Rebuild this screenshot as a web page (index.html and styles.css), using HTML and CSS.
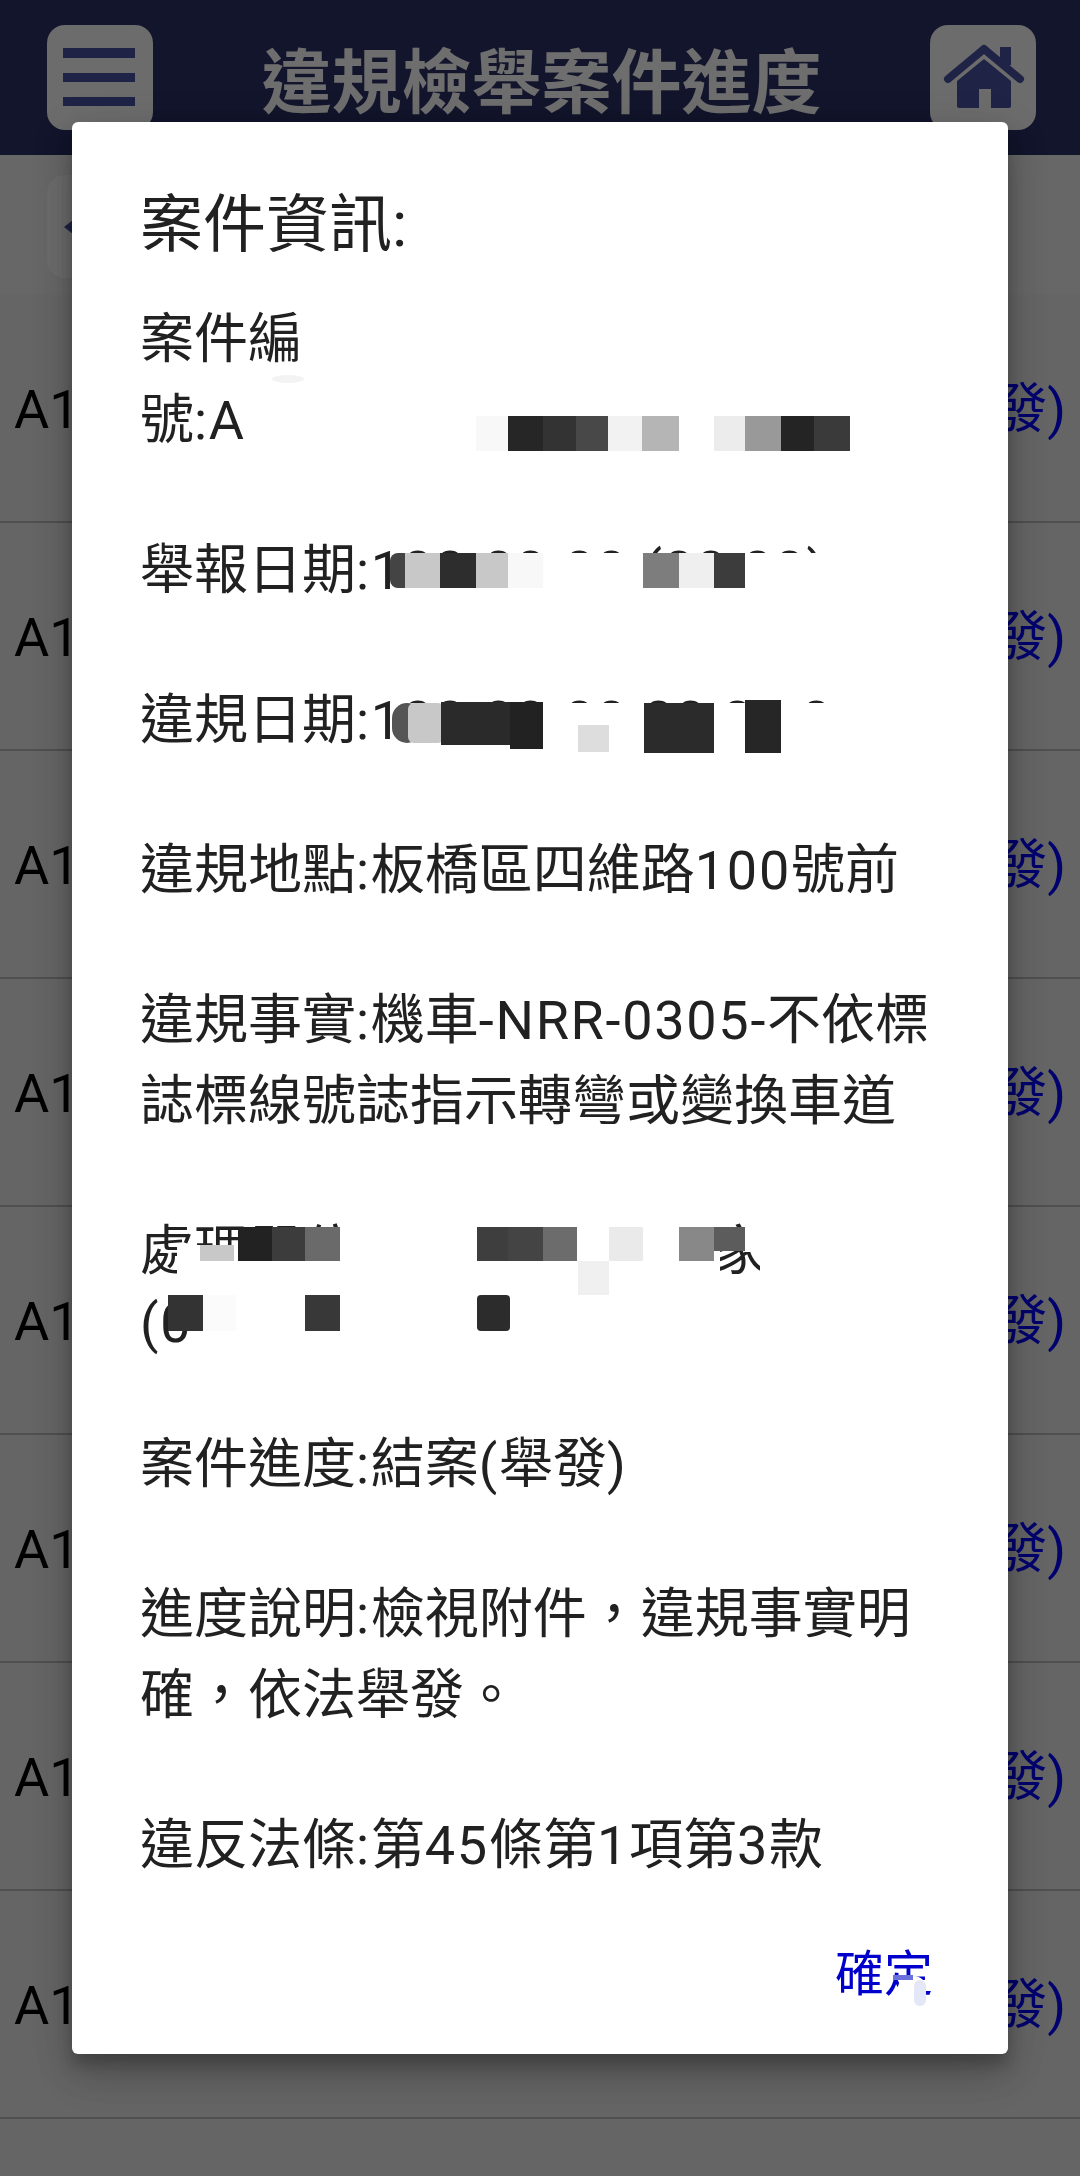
FILE: index.html
```html
<!DOCTYPE html>
<html lang="zh-Hant">
<head>
<meta charset="utf-8">
<title>違規檢舉案件進度</title>
<link rel="stylesheet" href="styles.css">
</head>
<body>
<header class="topbar">
  <button class="icon-btn" aria-label="選單">
    <svg class="btn-svg" viewBox="0 0 106 105"><rect class="glyph" x="16" y="23" width="72" height="10"/><rect class="glyph" x="16" y="48" width="72" height="9"/><rect class="glyph" x="16" y="72" width="72" height="9"/></svg>
  </button>
  <h1 class="page-title">違規檢舉案件進度</h1>
  <button class="icon-btn" aria-label="首頁">
    <svg class="btn-svg" viewBox="0 0 106 105"><path class="glyph" d="M27 56 54 34 81 56V81Q81 83 79 83H61V64H49V83H29Q27 83 27 81Z"/><rect class="glyph" x="70" y="22" width="11" height="18"/><path class="roof" d="M18 54 54 24 90 54"/></svg>
  </button>
</header>
<nav class="subbar">
  <button class="back-btn" aria-label="返回"><svg class="back-svg" viewBox="0 0 20 30"><path class="glyph" d="M16 4 2 15 16 26Z"/></svg></button>
</nav>
<main class="case-list">
  <div class="case-row"><span>A1</span><span class="status">結案(舉發)</span></div>
  <div class="case-row"><span>A1</span><span class="status">結案(舉發)</span></div>
  <div class="case-row"><span>A1</span><span class="status">結案(舉發)</span></div>
  <div class="case-row"><span>A1</span><span class="status">結案(舉發)</span></div>
  <div class="case-row"><span>A1</span><span class="status">結案(舉發)</span></div>
  <div class="case-row"><span>A1</span><span class="status">結案(舉發)</span></div>
  <div class="case-row"><span>A1</span><span class="status">結案(舉發)</span></div>
  <div class="case-row"><span>A1</span><span class="status">結案(舉發)</span></div>
</main>
<div class="scrim">
  <section class="dialog">
    <h2 class="dialog-title">案件資訊<span class="lat">:</span></h2>
    <p class="field">案件編<br>號<span class="lat">:A</span></p>
    <p class="field">舉報日期<span class="lat">:100-00-00 (00:00)</span></p>
    <p class="field">違規日期<span class="lat">:100-00-00 00:00:0</span></p>
    <p class="field">違規地點<span class="lat">:</span>板橋區四維路<span class="lat">100</span>號前</p>
    <p class="field">違規事實<span class="lat">:</span>機車<span class="lat">-NRR-0305-</span>不依標誌標線號誌指示轉彎或變換車道</p>
    <p class="field">處理單位<span class="lat">:</span><span class="gap"></span>家<span class="phone lat">(0</span></p>
    <p class="field">案件進度<span class="lat">:</span>結案<span class="lat">(</span>舉發<span class="lat">)</span></p>
    <p class="field">進度說明<span class="lat">:</span>檢視附件&#65292;違規事實明確&#65292;依法舉發。</p>
    <p class="field">違反法條<span class="lat">:</span>第<span class="lat">45</span>條第<span class="lat">1</span>項第<span class="lat">3</span>款</p>
    <div class="actions"><span class="confirm">確定</span></div>
    <svg class="redactions" viewBox="72 122 936 1932" aria-hidden="true">
      <ellipse cx="288" cy="379" rx="16" ry="4" fill="#f3f3f3"/>
      <rect x="476" y="416" width="32" height="35" fill="#f8f8f8"/>
      <rect x="508" y="416" width="35" height="35" fill="#262626"/>
      <rect x="543" y="416" width="33" height="35" fill="#333333"/>
      <rect x="576" y="416" width="32" height="35" fill="#484848"/>
      <rect x="608" y="416" width="34" height="35" fill="#f2f2f2"/>
      <rect x="642" y="416" width="37" height="35" fill="#b5b5b5"/>
      <rect x="714" y="416" width="31" height="35" fill="#ececec"/>
      <rect x="745" y="416" width="36" height="35" fill="#999999"/>
      <rect x="781" y="416" width="33" height="35" fill="#242424"/>
      <rect x="814" y="416" width="36" height="35" fill="#3a3a3a"/>

      <rect x="390" y="553" width="445" height="55" fill="#ffffff"/>
      <rect x="390" y="553" width="22" height="35" rx="8" fill="#444444"/>
      <rect x="405" y="553" width="35" height="35" fill="#c8c8c8"/>
      <rect x="440" y="553" width="36" height="35" fill="#2d2d2d"/>
      <rect x="476" y="553" width="32" height="35" fill="#c8c8c8"/>
      <rect x="508" y="553" width="35" height="35" fill="#f8f8f8"/>
      <rect x="643" y="553" width="36" height="35" fill="#7d7d7d"/>
      <rect x="679" y="553" width="35" height="35" fill="#efefef"/>
      <rect x="714" y="553" width="31" height="35" fill="#3c3c3c"/>

      <rect x="392" y="703" width="470" height="55" fill="#ffffff"/>
      <rect x="392" y="703" width="30" height="40" rx="15" fill="#555555"/>
      <rect x="408" y="703" width="36" height="40" rx="6" fill="#c8c8c8"/>
      <rect x="441" y="702" width="102" height="43" fill="#2a2a2a"/>
      <rect x="510" y="702" width="33" height="47" fill="#222222"/>
      <rect x="578" y="725" width="31" height="27" fill="#dddddd"/>
      <rect x="644" y="703" width="70" height="50" fill="#2b2b2b"/>
      <rect x="745" y="700" width="36" height="53" fill="#262626"/>

      <rect x="177" y="1245" width="61" height="48" fill="#ffffff"/>
      <rect x="238" y="1227" width="482" height="66" fill="#ffffff"/>
      <rect x="745" y="1215" width="40" height="37" fill="#ffffff"/>
      <rect x="760" y="1250" width="25" height="40" fill="#ffffff"/>
      <rect x="200" y="1245" width="34" height="16" fill="#c8c8c8"/>
      <rect x="238" y="1227" width="34" height="34" fill="#222222"/>
      <rect x="272" y="1227" width="33" height="34" fill="#3c3c3c"/>
      <rect x="305" y="1227" width="35" height="34" fill="#6a6a6a"/>
      <rect x="477" y="1227" width="31" height="34" fill="#3e3e3e"/>
      <rect x="508" y="1227" width="35" height="34" fill="#444444"/>
      <rect x="543" y="1227" width="34" height="34" fill="#6c6c6c"/>
      <rect x="609" y="1227" width="34" height="34" fill="#eaeaea"/>
      <rect x="679" y="1227" width="35" height="34" fill="#888888"/>
      <rect x="714" y="1227" width="31" height="24" fill="#5c5c5c"/>
      <rect x="578" y="1261" width="31" height="34" fill="#f0f0f0"/>
      <rect x="168" y="1295" width="35" height="36" fill="#333333"/>
      <rect x="203" y="1295" width="33" height="36" fill="#fbfbfb"/>
      <rect x="305" y="1295" width="35" height="36" fill="#383838"/>
      <rect x="477" y="1295" width="33" height="36" rx="4" fill="#2c2c2c"/>

      <rect x="898" y="1976" width="28" height="30" rx="12" fill="#ffffff"/>
      <rect x="893" y="1975" width="20" height="5" fill="#6a70dc"/>
      <rect x="914" y="1980" width="12" height="26" rx="6" fill="#e4e7f8"/>
    </svg>
  </section>
</div>
</body>
</html>
```
FILE: styles.css
```css
* { box-sizing: border-box; }
html, body { margin: 0; height: 100%; }
body {
  width: 1080px;
  height: 2176px;
  overflow: hidden;
  position: relative;
  background: #e9e9e9;
  color: #000000;
  font-family: Roboto, "Noto Sans CJK TC", sans-serif;
  font-size: 54px;
}
.topbar {
  height: 155px;
  background: #2a3164;
  display: flex;
  align-items: flex-start;
  justify-content: space-between;
  padding: 25px 44px 0 47px;
}
.icon-btn, .back-btn {
  border: 0;
  padding: 0;
  background: #fafafa;
  border-radius: 18px;
}
.icon-btn { width: 106px; height: 105px; }
.btn-svg { display: block; width: 106px; height: 105px; }
.glyph { fill: #4851a3; }
.roof { fill: none; stroke: #4851a3; stroke-width: 8; stroke-linecap: round; stroke-linejoin: round; }
.page-title {
  margin: 0;
  font-size: 70px;
  line-height: 118px;
  font-weight: 700;
  color: #ffffff;
}
.subbar {
  height: 140px;
  padding: 20px 0 0 47px;
  background: #efefef;
}
.back-btn { display: flex; align-items: center; width: 106px; height: 103px; padding-left: 15px; }
.back-svg { width: 20px; height: 30px; }
.case-row {
  height: 228px;
  border-bottom: 2px solid #bababa;
  background: #e9e9e9;
  padding: 2px 14px 0;
  display: flex;
  align-items: center;
  justify-content: space-between;
  line-height: 81px;
}
.status { color: #0000ff; }
.scrim {
  position: absolute;
  inset: 0;
  background: rgba(0, 0, 0, 0.57);
  display: flex;
  justify-content: center;
  align-items: center;
}
.dialog {
  position: relative;
  width: 936px;
  height: 1932px;
  padding: 58px 69px 0 68px;
  background: #ffffff;
  border-radius: 6px;
  box-shadow: 0 24px 38px rgba(0, 0, 0, 0.14), 0 9px 46px rgba(0, 0, 0, 0.12), 0 11px 15px rgba(0, 0, 0, 0.2);
  color: #212121;
}
.dialog-title {
  margin: 0 0 29px;
  font-size: 63px;
  line-height: 90px;
  font-weight: 400;
}
.field {
  margin: 0 0 69px;
  line-height: 81px;
}
.lat { letter-spacing: 1.7px; line-height: 0; }
.phone { display: block; line-height: 63px; }
.gap { display: inline-block; width: 342px; }
.actions { display: flex; justify-content: flex-end; margin-top: -15px; }
.confirm { font-size: 49px; line-height: 70px; color: #0000cc; margin-right: 6px; }
.redactions {
  position: absolute;
  inset: 0;
  width: 100%;
  height: 100%;
  filter: blur(0.7px);
}
```
